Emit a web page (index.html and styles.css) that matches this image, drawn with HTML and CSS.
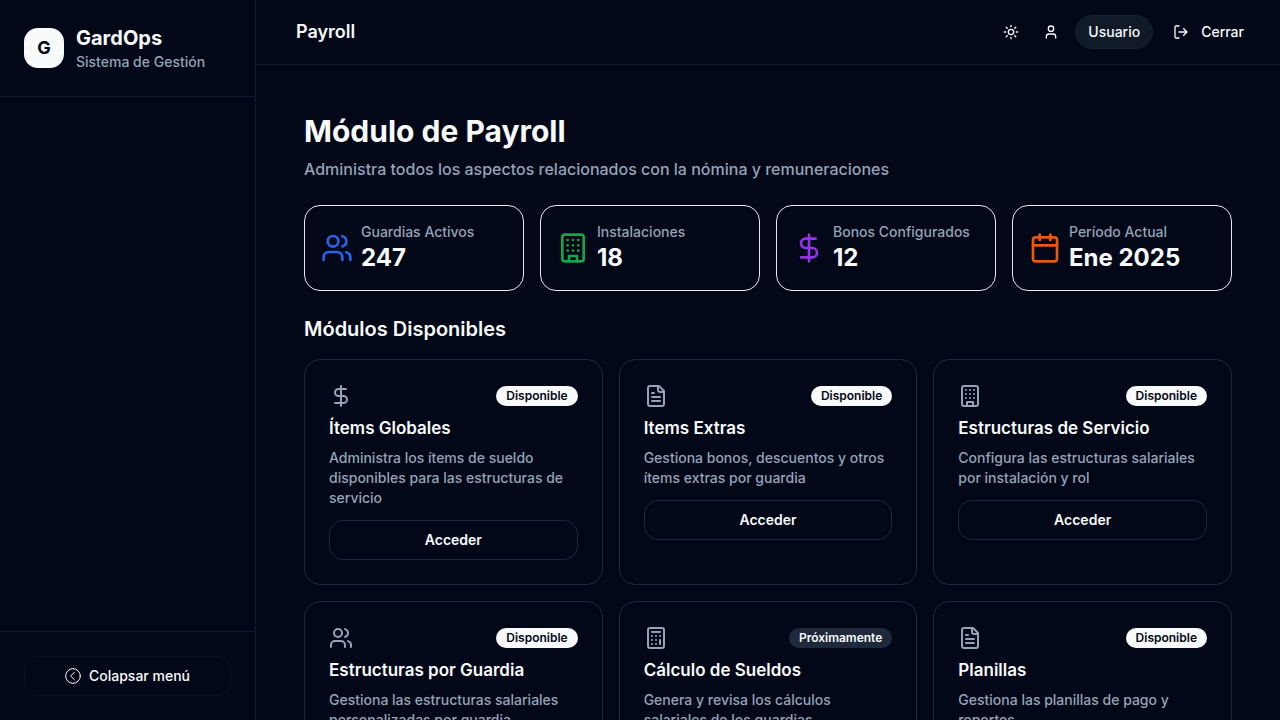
FILE: index.html
```html
<!DOCTYPE html>
<html lang="es">
<head>
<meta charset="utf-8">
<meta name="viewport" content="width=device-width, initial-scale=1">
<title>Payroll - GardOps</title>
<link rel="stylesheet" href="styles.css">
</head>
<body>
<svg class="sprite" aria-hidden="true">
  <symbol id="i-sun" viewBox="0 0 24 24"><circle cx="12" cy="12" r="4"/><path d="M12 2v2M12 20v2M4.93 4.93l1.41 1.41M17.66 17.66l1.41 1.41M2 12h2M20 12h2M6.34 17.66l-1.41 1.41M19.07 4.93l-1.41 1.41"/></symbol>
  <symbol id="i-user" viewBox="0 0 24 24"><path d="M19 21v-2a4 4 0 0 0-4-4H9a4 4 0 0 0-4 4v2"/><circle cx="12" cy="7" r="4"/></symbol>
  <symbol id="i-logout" viewBox="0 0 24 24"><path d="M9 21H5a2 2 0 0 1-2-2V5a2 2 0 0 1 2-2h4M16 17l5-5-5-5M21 12H9"/></symbol>
  <symbol id="i-collapse" viewBox="0 0 24 24"><circle cx="12" cy="12" r="11"/><path d="M14 17.5l-5.5-5.5 5.5-5.5"/></symbol>
  <symbol id="i-users" viewBox="0 0 24 24"><path d="M16 21v-2a4 4 0 0 0-4-4H6a4 4 0 0 0-4 4v2"/><circle cx="9" cy="7" r="4"/><path d="M22 21v-2a4 4 0 0 0-3-3.87M16 3.13a4 4 0 0 1 0 7.75"/></symbol>
  <symbol id="i-building" viewBox="0 0 24 24"><rect x="4" y="2" width="16" height="20" rx="2"/><path d="M9 22v-4h6v4M8 6h.01M16 6h.01M12 6h.01M12 10h.01M12 14h.01M16 10h.01M16 14h.01M8 10h.01M8 14h.01"/></symbol>
  <symbol id="i-dollar" viewBox="0 0 24 24"><path d="M12 2v20M17 5H9.5a3.5 3.5 0 0 0 0 7h5a3.5 3.5 0 0 1 0 7H6"/></symbol>
  <symbol id="i-calendar" viewBox="0 0 24 24"><path d="M8 2v4M16 2v4"/><rect x="3" y="4" width="18" height="18" rx="2"/><path d="M3 10h18"/></symbol>
  <symbol id="i-file" viewBox="0 0 24 24"><path d="M15 2H6a2 2 0 0 0-2 2v16a2 2 0 0 0 2 2h12a2 2 0 0 0 2-2V7ZM14 2v4a2 2 0 0 0 2 2h4M10 9H8M16 13H8M16 17H8"/></symbol>
  <symbol id="i-calculator" viewBox="0 0 24 24"><rect x="4" y="2" width="16" height="20" rx="2"/><path d="M8 6h8M16 14v4M16 10h.01M12 10h.01M8 10h.01M12 14h.01M8 14h.01M12 18h.01M8 18h.01"/></symbol>
</svg>
<div class="app">
  <aside class="sidebar">
    <div class="brand">
      <div class="brand-logo">G</div>
      <div>
        <div class="brand-name">GardOps</div>
        <div class="brand-sub">Sistema de Gestión</div>
      </div>
    </div>
    <nav class="side-nav" aria-label="Principal"></nav>
    <div class="side-foot">
      <button class="btn btn-collapse" type="button"><svg class="icon icon-sm icon-thin"><use href="#i-collapse"/></svg>Colapsar menú</button>
    </div>
  </aside>
  <div class="content">
    <header class="topbar">
      <div class="topbar-title">Payroll</div>
      <div class="actions">
        <button class="ghost" type="button" aria-label="Cambiar tema"><svg class="icon icon-sm"><use href="#i-sun"/></svg></button>
        <button class="ghost" type="button" aria-label="Perfil"><svg class="icon icon-sm"><use href="#i-user"/></svg></button>
        <button class="user" type="button">Usuario</button>
        <button class="ghost logout" type="button"><svg class="icon icon-sm"><use href="#i-logout"/></svg>Cerrar</button>
      </div>
    </header>
    <main class="main">
      <h1 class="page-title">Módulo de Payroll</h1>
      <p class="page-sub">Administra todos los aspectos relacionados con la nómina y remuneraciones</p>
      <section class="stats" aria-label="Resumen">
        <div class="stat"><svg class="icon icon-lg blue"><use href="#i-users"/></svg><div><div class="stat-label">Guardias Activos</div><div class="stat-value">247</div></div></div>
        <div class="stat"><svg class="icon icon-lg green"><use href="#i-building"/></svg><div><div class="stat-label">Instalaciones</div><div class="stat-value">18</div></div></div>
        <div class="stat"><svg class="icon icon-lg purple"><use href="#i-dollar"/></svg><div><div class="stat-label">Bonos Configurados</div><div class="stat-value">12</div></div></div>
        <div class="stat"><svg class="icon icon-lg orange"><use href="#i-calendar"/></svg><div><div class="stat-label">Período Actual</div><div class="stat-value">Ene 2025</div></div></div>
      </section>
      <h2 class="section-title">Módulos Disponibles</h2>
      <section class="modules">
        <article class="card">
          <div class="card-top"><svg class="icon"><use href="#i-dollar"/></svg><span class="badge">Disponible</span></div>
          <h3 class="card-title">Ítems Globales</h3>
          <p class="card-text">Administra los ítems de sueldo disponibles para las estructuras de servicio</p>
          <button class="btn" type="button">Acceder</button>
        </article>
        <article class="card">
          <div class="card-top"><svg class="icon"><use href="#i-file"/></svg><span class="badge">Disponible</span></div>
          <h3 class="card-title">Items Extras</h3>
          <p class="card-text">Gestiona bonos, descuentos y otros ítems extras por guardia</p>
          <button class="btn" type="button">Acceder</button>
        </article>
        <article class="card">
          <div class="card-top"><svg class="icon"><use href="#i-building"/></svg><span class="badge">Disponible</span></div>
          <h3 class="card-title">Estructuras de Servicio</h3>
          <p class="card-text">Configura las estructuras salariales por instalación y rol</p>
          <button class="btn" type="button">Acceder</button>
        </article>
        <article class="card">
          <div class="card-top"><svg class="icon"><use href="#i-users"/></svg><span class="badge">Disponible</span></div>
          <h3 class="card-title">Estructuras por Guardia</h3>
          <p class="card-text">Gestiona las estructuras salariales personalizadas por guardia</p>
        </article>
        <article class="card">
          <div class="card-top"><svg class="icon"><use href="#i-calculator"/></svg><span class="badge badge-soon">Próximamente</span></div>
          <h3 class="card-title">Cálculo de Sueldos</h3>
          <p class="card-text">Genera y revisa los cálculos salariales de los guardias</p>
        </article>
        <article class="card">
          <div class="card-top"><svg class="icon"><use href="#i-file"/></svg><span class="badge">Disponible</span></div>
          <h3 class="card-title">Planillas</h3>
          <p class="card-text">Gestiona las planillas de pago y reportes</p>
        </article>
      </section>
    </main>
  </div>
</div>
</body>
</html>
```
FILE: styles.css
```css
:root {
  --bg: #020817;
  --fg: #f8fafc;
  --muted: #94a3b8;
  --line: #111a2b;
  --card-line: #1e293b;
}
* { box-sizing: border-box; }
body {
  margin: 0;
  background: var(--bg);
  color: var(--fg);
  font: 500 14px/20px Inter, sans-serif;
}
h1, h2, h3, p { margin: 0; }
button { font: inherit; color: inherit; background: none; border: 0; cursor: pointer; }
.sprite { display: none; }
.icon {
  width: 24px;
  height: 24px;
  flex: none;
  fill: none;
  stroke: currentColor;
  stroke-width: 2;
  stroke-linecap: round;
  stroke-linejoin: round;
}
.icon-sm { width: 16px; height: 16px; }
.icon-lg { width: 32px; height: 32px; }
.icon-thin { stroke-width: 1.5; }
.blue { color: #2563eb; }
.green { color: #16a34a; }
.purple { color: #9333ea; }
.orange { color: #ea580c; }

.app { display: flex; height: 100vh; overflow: hidden; }
.sidebar {
  display: flex;
  flex-direction: column;
  flex: none;
  width: 256px;
  border-right: 1px solid var(--line);
}
.brand {
  display: flex;
  align-items: center;
  gap: 12px;
  padding: 24px;
  border-bottom: 1px solid var(--line);
}
.brand-logo {
  display: grid;
  place-items: center;
  width: 40px;
  height: 40px;
  border-radius: 14px;
  background: var(--fg);
  color: var(--bg);
  font-size: 18px;
  font-weight: 700;
}
.brand-name { font-size: 20px; line-height: 28px; font-weight: 700; }
.brand-sub { color: var(--muted); }
.side-nav { flex: 1; }
.side-foot { padding: 24px; border-top: 1px solid var(--line); }
.btn {
  display: flex;
  align-items: center;
  justify-content: center;
  gap: 8px;
  width: 100%;
  height: 40px;
  border: 1px solid var(--card-line);
  border-radius: 14px;
  font-weight: 600;
}
.btn-collapse { border-color: #0a1221; font-weight: 500; }

.content { display: flex; flex-direction: column; flex: 1; min-width: 0; }
.topbar {
  display: flex;
  align-items: center;
  justify-content: space-between;
  flex: none;
  height: 65px;
  padding: 0 24px 0 40px;
  border-bottom: 1px solid var(--line);
}
.topbar-title { font-size: 18px; line-height: 28px; font-weight: 600; }
.actions { display: flex; align-items: center; gap: 8px; }
.ghost { display: flex; align-items: center; padding: 8px; }
.logout { gap: 12px; padding: 8px 12px; }
.user {
  padding: 6px 12px;
  border: 1px solid #162031;
  border-radius: 17px;
  background: #111a29;
}

.main { flex: 1; min-height: 0; overflow-y: auto; scrollbar-width: none; padding: 48px; }
.page-title { font-size: 30px; line-height: 36px; font-weight: 700; }
.page-sub { margin-top: 8px; font-size: 16px; line-height: 24px; color: var(--muted); }
.stats { display: grid; grid-template-columns: repeat(4, 1fr); gap: 16px; margin-top: 24px; }
.stat {
  display: flex;
  align-items: center;
  gap: 8px;
  padding: 16px;
  border: 1px solid #e5e7eb;
  border-radius: 16px;
}
.stat-label { color: var(--muted); }
.stat-value { font-size: 24px; line-height: 32px; font-weight: 700; }
.section-title { margin: 24px 0 16px; font-size: 20px; line-height: 28px; font-weight: 600; }
.modules { display: grid; grid-template-columns: repeat(3, 1fr); gap: 16px; }
.card { padding: 24px; border: 1px solid var(--card-line); border-radius: 16px; }
.card-top { display: flex; align-items: center; justify-content: space-between; color: var(--muted); }
.badge {
  padding: 2px 10px;
  border-radius: 10px;
  background: var(--fg);
  color: var(--bg);
  font-size: 12px;
  line-height: 16px;
  font-weight: 600;
}
.badge-soon { background: #1e293b; color: var(--fg); }
.card-title { margin: 6px 0; font-size: 17px; line-height: 28px; font-weight: 600; }
.card-text { margin-bottom: 12px; color: var(--muted); }
```
